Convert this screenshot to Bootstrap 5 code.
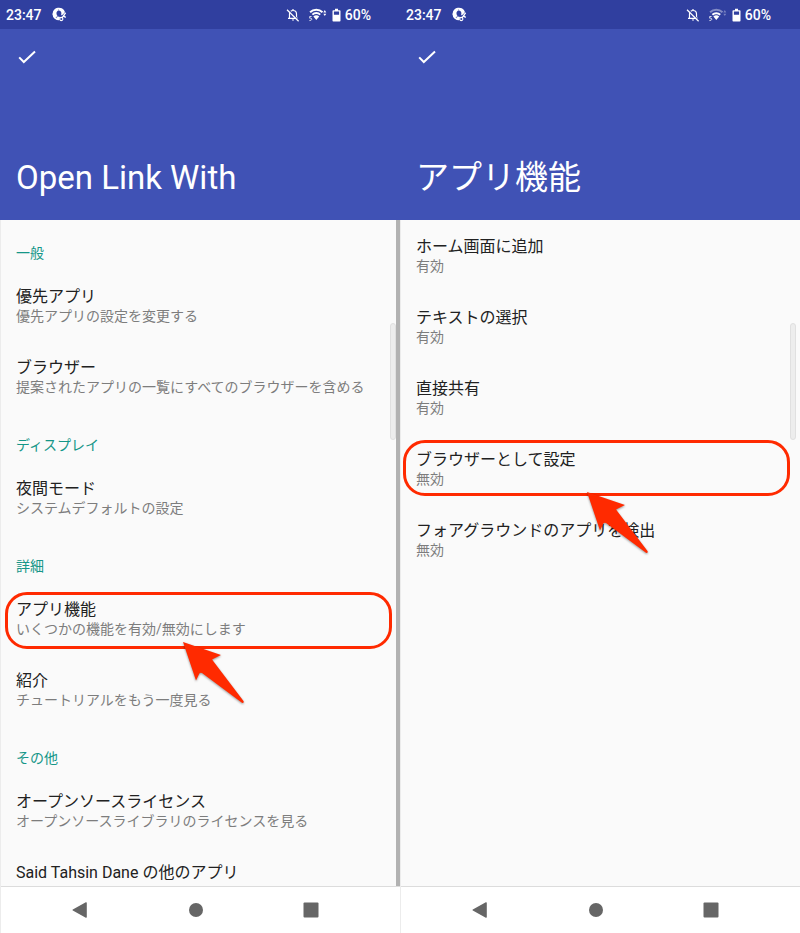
<!DOCTYPE html>
<html lang="ja">
<head>
<meta charset="utf-8">
<meta name="viewport" content="width=device-width, initial-scale=1">
<title>Open Link With</title>
<link href="https://cdn.jsdelivr.net/npm/bootstrap@5.3.0/dist/css/bootstrap.min.css" rel="stylesheet">
<style>
  body { font-family: Roboto, "Noto Sans CJK JP", sans-serif; background: #fafafa; color: #212121; }
  .phone { border-left: 1px solid #ececec; }
  .status-bar { height: 29px; background: #303f9f; padding-left: 6px; padding-right: 29px; font-size: 14px; line-height: 20px; font-weight: 500; margin-left: -1px; }
  .status-bar svg { display: block; }
  .clock { margin-right: 10px; }
  .app-bar { height: 191px; background: #4052b5; padding: 16px 15px 20px; margin-left: -1px; }
  .app-bar h1 { font-size: 33px; line-height: 44px; font-weight: 400; margin: 0; padding-left: 1px; }
  .confirm-btn { line-height: 0; }
  .settings-pane { flex: 1 1 0; min-height: 0; }
  .pane-divider { border-right: 4px solid #b2b2b2; }
  .category { padding: 23px 15px 7px; font-size: 14px; line-height: 20px; font-weight: 400; color: #159688; margin: 0; }
  .setting { padding: 17px 15px 15px; color: #212121; line-height: 20px; }
  .setting-title { font-size: 16px; line-height: 19px; }
  .setting-note { font-size: 14px; color: #7d7d7d; }
  .marked { z-index: 1; }
  .marker-ring { border: 3px solid #ff2a00; border-radius: 22px; }
  .ring-a { inset: 9px 4px 5px 4px; }
  .ring-b { inset: 7px 10px 8px 2px; }
  .marker-arrow { top: 58px; left: 181px; filter: drop-shadow(0 1px 1px rgba(0,0,0,.4)); }
  .arrow-b { left: 185px; }
  .scroll-thumb { top: 103px; right: 0; width: 6px; height: 117px; border: 1px solid #e0e0e0; border-radius: 3px; background: #ededed; }
  .thumb-inset { right: 4px; }
  .nav-keys { height: 47px; background: #fff; border-top: 1px solid #dcdcdc; padding-left: 21px; padding-right: 31px; }
  .nav-keys .btn { color: #666; line-height: 0; }
</style>
</head>
<body>
<svg class="d-none" aria-hidden="true">
  <symbol id="i-account" viewBox="0 0 15 15">
    <path fill="none" stroke="#fff" stroke-width="1.500" d="M7 12.600A5.600 5.600 0 1 1 12.300 5.400"/>
    <path fill="#fff" d="M6.500 1.200A5.800 5.800 0 0 0 3 11.600L4.500 9.800 6 9.200C3.800 7.600 3.900 3.800 6.800 3.400z"/>
    <path fill="#fff" d="M7 1.200a5.800 5.800 0 0 1 5.600 4.600L10.300 8 9 8.200C10 5.800 9 3.500 7 3.400zM3.600 11.200 6 9.600l2 .4-.8 3A6 6 0 0 1 3.600 11.200z"/>
    <circle cx="9.300" cy="12" r="1.600" fill="none" stroke="#fff" stroke-width="1.100"/>
    <path d="M10.200 10.600 13.400 6.200M11.900 9.200l1.400.9" fill="none" stroke="#fff" stroke-width="1.400" stroke-linecap="round"/>
  </symbol>
  <symbol id="i-bell-off" viewBox="0 0 14 14">
    <path d="M3.500 10V6a3.500 3.500 0 0 1 7 0v4M2 10.300h10M7 1v1.500" fill="none" stroke="#fff" stroke-width="1.200"/>
    <path d="M5.700 11.500h2.600L7 13z" fill="#fff"/>
    <path d="M1.800 1.200 13 12.600" stroke="#303f9f" stroke-width="1.200"/>
    <path d="M1 1.800 12.600 13.200" stroke="#fff" stroke-width="1.200"/>
  </symbol>
  <symbol id="i-wifi" viewBox="0 0 20 14">
    <path d="M2.100 4.200a8.800 8.800 0 0 1 12.400 0M4.400 6.600a5.600 5.600 0 0 1 7.800 0" fill="none" stroke="#fff" stroke-width="2"/>
    <path d="M5.400 8.500a4 4 0 0 1 5.800 0L8.300 12z" fill="#fff"/>
    <path d="M3.600 8.500H1.700v1.700h1q1.100.1 1.100 1.100T1.400 12.600" fill="none" stroke="#fff" stroke-width=".8"/>
    <path d="m15.300 4.400 1.500-2.300 1.500 2.300zM15.300 5.800h3l-1.500 2.300z" fill="#fff"/>
  </symbol>
  <symbol id="i-wifi-weak" viewBox="0 0 20 14">
    <path d="M2.100 4.200a8.800 8.800 0 0 1 12.400 0" fill="none" stroke="#fff" stroke-opacity=".4" stroke-width="2"/>
    <path d="M4.400 6.800a5.600 5.600 0 0 1 7.800 0" fill="none" stroke="#fff" stroke-width="2"/>
    <path d="M5.400 8.500a4 4 0 0 1 5.800 0L8.300 12z" fill="#fff"/>
    <path d="M3.600 8.500H1.700v1.700h1q1.100.1 1.100 1.100T1.400 12.600" fill="none" stroke="#fff" stroke-width=".8"/>
    <path d="m15.300 4.400 1.500-2.300 1.500 2.300zM15.300 5.800h3l-1.500 2.300z" fill="#fff" fill-opacity=".35"/>
  </symbol>
  <symbol id="i-battery" viewBox="0 0 9 14">
    <path fill="#fff" fill-rule="evenodd" d="M3 .8h3v1.400h1.700q.8 0 .8.800v9.800q0 .8-.8.800H1.300q-.8 0-.8-.8V3q0-.8.8-.8H3zM1.900 3.600v3.100h5.200V3.600z"/>
  </symbol>
  <symbol id="i-check" viewBox="0 0 24 24">
    <path d="m4.200 12.400 4.600 4.600L20 6.400" fill="none" stroke="#fff" stroke-width="2"/>
  </symbol>
  <symbol id="i-arrow" viewBox="0 0 64 64">
    <path fill="#ff2a00" d="M1 1 39 14 30 18.500 61.500 60q.8 2-1.200 2L20 32q-1.500-.8-2.500.3L14 39.500z"/>
  </symbol>
</svg>

<main class="d-flex vh-100 overflow-hidden">
  <section class="phone d-flex flex-column w-50" aria-label="Open Link With">
    <div class="status-bar d-flex flex-shrink-0 align-items-center text-white">
      <span class="clock">23:47</span>
      <svg width="15" height="15"><use href="#i-account"/></svg>
      <svg class="ms-auto" width="14" height="14"><use href="#i-bell-off"/></svg>
      <svg class="ms-2" width="20" height="14"><use href="#i-wifi"/></svg>
      <svg class="ms-1 me-1" width="9" height="14"><use href="#i-battery"/></svg>
      <span>60%</span>
    </div>
    <header class="app-bar d-flex flex-shrink-0 flex-column justify-content-between align-items-start text-white">
      <button type="button" class="btn p-0 border-0 confirm-btn" aria-label="完了"><svg width="24" height="24"><use href="#i-check"/></svg></button>
      <h1>Open Link With</h1>
    </header>
    <div class="settings-pane pane-divider position-relative overflow-hidden">
      <h2 class="category">一般</h2>
      <a href="#" class="setting d-block text-decoration-none"><div class="setting-title">優先アプリ</div><div class="setting-note">優先アプリの設定を変更する</div></a>
      <a href="#" class="setting d-block text-decoration-none"><div class="setting-title">ブラウザー</div><div class="setting-note">提案されたアプリの一覧にすべてのブラウザーを含める</div></a>
      <h2 class="category">ディスプレイ</h2>
      <a href="#" class="setting d-block text-decoration-none"><div class="setting-title">夜間モード</div><div class="setting-note">システムデフォルトの設定</div></a>
      <h2 class="category">詳細</h2>
      <a href="#" class="setting marked position-relative d-block text-decoration-none"><div class="setting-title">アプリ機能</div><div class="setting-note">いくつかの機能を有効/無効にします</div>
        <span class="marker-ring ring-a position-absolute"></span>
        <svg class="marker-arrow position-absolute" width="64" height="64"><use href="#i-arrow"/></svg>
      </a>
      <a href="#" class="setting d-block text-decoration-none"><div class="setting-title">紹介</div><div class="setting-note">チュートリアルをもう一度見る</div></a>
      <h2 class="category">その他</h2>
      <a href="#" class="setting d-block text-decoration-none"><div class="setting-title">オープンソースライセンス</div><div class="setting-note">オープンソースライブラリのライセンスを見る</div></a>
      <a href="#" class="setting d-block text-decoration-none"><div class="setting-title">Said Tahsin Dane の他のアプリ</div></a>
      <span class="scroll-thumb position-absolute"></span>
    </div>
    <nav class="nav-keys d-flex flex-shrink-0 align-items-stretch" aria-label="ナビゲーション">
      <button type="button" class="btn border-0 p-0 flex-fill" aria-label="戻る"><svg width="16" height="16" viewBox="0 0 16 16" fill="currentColor"><path d="M.8 7.400 13.800.3q1-.3 1 .700v14q0 1-1 .7L.8 8.600q-.8-.6 0-1.200z"/></svg></button>
      <button type="button" class="btn border-0 p-0 flex-fill" aria-label="ホーム"><svg width="16" height="16" viewBox="0 0 16 16" fill="currentColor"><circle cx="8" cy="8" r="7"/></svg></button>
      <button type="button" class="btn border-0 p-0 flex-fill" aria-label="履歴"><svg width="16" height="16" viewBox="0 0 16 16" fill="currentColor"><rect x=".5" y=".5" width="15" height="15" rx="1"/></svg></button>
    </nav>
  </section>

  <section class="phone d-flex flex-column w-50" aria-label="アプリ機能">
    <div class="status-bar d-flex flex-shrink-0 align-items-center text-white">
      <span class="clock">23:47</span>
      <svg width="15" height="15"><use href="#i-account"/></svg>
      <svg class="ms-auto" width="14" height="14"><use href="#i-bell-off"/></svg>
      <svg class="ms-2" width="20" height="14"><use href="#i-wifi-weak"/></svg>
      <svg class="ms-1 me-1" width="9" height="14"><use href="#i-battery"/></svg>
      <span>60%</span>
    </div>
    <header class="app-bar d-flex flex-shrink-0 flex-column justify-content-between align-items-start text-white">
      <button type="button" class="btn p-0 border-0 confirm-btn" aria-label="完了"><svg width="24" height="24"><use href="#i-check"/></svg></button>
      <h1>アプリ機能</h1>
    </header>
    <div class="settings-pane position-relative overflow-hidden">
      <a href="#" class="setting d-block text-decoration-none"><div class="setting-title">ホーム画面に追加</div><div class="setting-note">有効</div></a>
      <a href="#" class="setting d-block text-decoration-none"><div class="setting-title">テキストの選択</div><div class="setting-note">有効</div></a>
      <a href="#" class="setting d-block text-decoration-none"><div class="setting-title">直接共有</div><div class="setting-note">有効</div></a>
      <a href="#" class="setting marked position-relative d-block text-decoration-none"><div class="setting-title">ブラウザーとして設定</div><div class="setting-note">無効</div>
        <span class="marker-ring ring-b position-absolute"></span>
        <svg class="marker-arrow arrow-b position-absolute" width="64" height="64"><use href="#i-arrow"/></svg>
      </a>
      <a href="#" class="setting d-block text-decoration-none"><div class="setting-title">フォアグラウンドのアプリを検出</div><div class="setting-note">無効</div></a>
      <span class="scroll-thumb thumb-inset position-absolute"></span>
    </div>
    <nav class="nav-keys d-flex flex-shrink-0 align-items-stretch" aria-label="ナビゲーション">
      <button type="button" class="btn border-0 p-0 flex-fill" aria-label="戻る"><svg width="16" height="16" viewBox="0 0 16 16" fill="currentColor"><path d="M.8 7.400 13.800.3q1-.3 1 .700v14q0 1-1 .7L.8 8.600q-.8-.6 0-1.200z"/></svg></button>
      <button type="button" class="btn border-0 p-0 flex-fill" aria-label="ホーム"><svg width="16" height="16" viewBox="0 0 16 16" fill="currentColor"><circle cx="8" cy="8" r="7"/></svg></button>
      <button type="button" class="btn border-0 p-0 flex-fill" aria-label="履歴"><svg width="16" height="16" viewBox="0 0 16 16" fill="currentColor"><rect x=".5" y=".5" width="15" height="15" rx="1"/></svg></button>
    </nav>
  </section>
</main>
<script src="https://cdn.jsdelivr.net/npm/bootstrap@5.3.0/dist/js/bootstrap.bundle.min.js"></script>
</body>
</html>
